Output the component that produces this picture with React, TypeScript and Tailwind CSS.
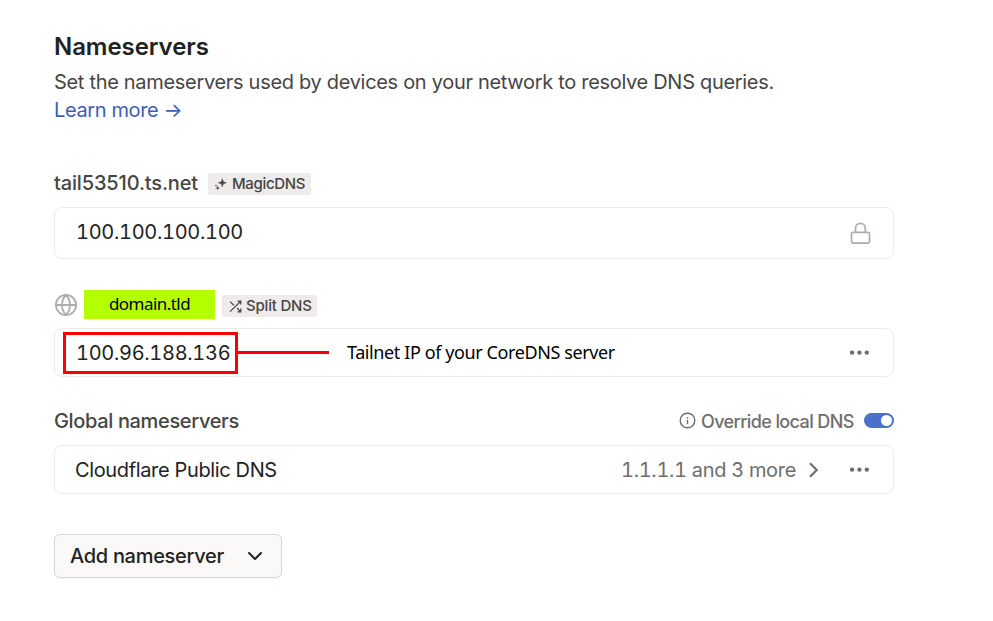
import React from "react";

function Dots() {
  return (
    <svg width="20" height="6" viewBox="0 0 20 6" fill="#706e6d" className="block">
      <circle cx="2.1" cy="2.6" r="2.2" />
      <circle cx="9.4" cy="2.6" r="2.2" />
      <circle cx="16.8" cy="2.6" r="2.2" />
    </svg>
  );
}

function Sparkles() {
  return (
    <svg width="13" height="13" viewBox="0 0 13 13" fill="#474544" className="block">
      <path d="M8.3 0.8L9.3 3.8L12.3 4.8L9.3 5.8L8.3 8.8L7.3 5.8L4.3 4.8L7.3 3.8Z" stroke="#474544" strokeWidth=".5" />
      <path d="M3.7 8.1L4.2 9.5L5.6 10L4.2 10.5L3.7 11.9L3.2 10.5L1.8 10L3.2 9.5Z" stroke="#474544" strokeWidth=".3" />
      <circle cx="2" cy="7.5" r=".8" />
    </svg>
  );
}

function Shuffle() {
  return (
    <svg width="13" height="13" viewBox="0 0 13 13" fill="none" stroke="#474544" strokeWidth="1.2" className="block">
      <path d="M8.5 1.2H11.8V4.5M11.8 1.2L1 11.6M8.5 11.8H11.8V8.5M11.8 11.8L8 8M1 1.6L5 5.3" />
    </svg>
  );
}

function Globe() {
  return (
    <svg width="24" height="24" viewBox="0 0 24 24" fill="none" stroke="#afacab" strokeWidth="1.8" className="block">
      <circle cx="12" cy="12" r="10.1" />
      <path d="M2 12H22M12 2C17.3 7.3 17.3 16.7 12 22C6.7 16.7 6.7 7.3 12 2Z" />
    </svg>
  );
}

export default function App() {
  return (
    <main className="h-[621px] w-[993px] overflow-hidden bg-white pl-[54px] pt-[31px] font-['Inter',sans-serif] text-[20px] tracking-[-0.32px] text-[#232222]">
      <div className="w-[840px] whitespace-nowrap">
        <h2 className="h-8 text-[24px] font-semibold leading-8 tracking-[-0.07px]">Nameservers</h2>
        <p className="mt-[5px] h-7 leading-7 tracking-[-0.31px] text-[#474544]">
          <span>Set the nameservers used by devices on your network to resolve DNS queries.</span>
        </p>
        <a className="flex h-7 items-center leading-7 tracking-[-0.37px] text-[#3f5db3]">
          <span>Learn more →</span>
        </a>

        <div className="mt-12 flex h-[23px] items-center">
          <span className="w-[154px] font-medium leading-[23px] tracking-[-0.15px] text-[#474544]">tail53510.ts.net</span>
          <span className="mt-px flex h-[22px] w-[103px] items-center gap-[5px] rounded-[2px] bg-[#eeebea] pl-[6px] text-[15px] font-medium text-[#474544]">
            <Sparkles />
            <span>MagicDNS</span>
          </span>
        </div>
        <div className="mt-3 flex h-[52px] items-center justify-between rounded-lg border border-[#eeebea] pl-[21px] pr-[22px]">
          <span className="-mt-[3px] tabular-nums">100.100.100.100</span>
          <svg width="21" height="23" viewBox="0 0 21 23" fill="none" stroke="#afacab" strokeWidth="1.7" className="block">
            <rect x="1.5" y="10.3" width="18" height="10.8" rx="1.5" />
            <path d="M5.5 10V6.3A4.9 4.9 0 0 1 15.3 6.3V10" />
          </svg>
        </div>

        <div className="mt-[31px] flex h-[29px] items-center">
          <Globe />
          <span className="ml-1.5 flex h-[29px] w-[131px] items-center justify-center bg-[#b3ff00] pb-[2px] font-['Noto_Sans',sans-serif] text-[17px] tracking-[-0.55px] text-black">
            <span>domain.tld</span>
          </span>
          <span className="ml-[7px] mt-[2px] flex h-[22px] w-[95px] items-center gap-[4px] rounded-[2px] bg-[#eeebea] pl-[7px] pt-px text-[15px] font-medium tracking-[-0.2px] text-[#474544]">
            <Shuffle />
            <span>Split DNS</span>
          </span>
        </div>
        <div className="mt-[9px] flex h-[49px] items-center rounded-lg border border-[#eeebea] pl-2 pr-[23px]">
          <span className="flex h-[42px] w-[175px] shrink-0 items-center border-[3px] border-[#fa0000] pl-[10px]">
            <span className="tabular-nums">100.96.188.136</span>
          </span>
          <span className="h-[3px] w-[91px] shrink-0 bg-[#fa0000]" />
          <span className="ml-[18px] font-['Noto_Sans',sans-serif] text-[18px] tracking-[-0.4px] text-black">Tailnet IP of your CoreDNS server</span>
          <span className="ml-auto"><Dots /></span>
        </div>

        <div className="mt-[31px] flex h-[26px] items-center font-medium">
          <span className="tracking-[-0.35px] text-[#474544]">Global nameservers</span>
          <svg width="17" height="17" viewBox="0 0 17 17" fill="none" stroke="#706e6d" strokeWidth="1.4" className="-mt-px ml-auto block">
            <circle cx="8.5" cy="8.5" r="7.3" />
            <path d="M8.5 7.8V12M8.5 5V6.5" />
          </svg>
          <span className="ml-[5px] w-[155px] text-[18px] tracking-[-0.6px] text-[#706e6d]">Override local DNS</span>
          <span className="-mt-px ml-2 flex h-[15px] w-[30px] items-center justify-end rounded-full bg-[#4b70cc] pr-[2px]">
            <span className="size-[11px] rounded-full bg-white" />
          </span>
        </div>
        <div className="mt-[11px] flex h-[49px] items-center rounded-lg border border-[#eeebea] pl-5 pr-[23px]">
          <span className="tracking-[-0.36px]">Cloudflare Public DNS</span>
          <span className="ml-auto tabular-nums text-[#706e6d]">1.1.1.1 and 3 more</span>
          <svg width="12" height="16" viewBox="0 0 12 16" fill="none" stroke="#706e6d" strokeWidth="2.2" className="ml-3 mr-[30px] mt-px block">
            <path d="M2 1.2L8.7 8L2 14.8" />
          </svg>
          <Dots />
        </div>

        <button className="mt-10 flex h-11 w-[228px] items-center justify-between rounded-md border border-[#dad6d5] bg-[#faf9f8] pl-[15px] pr-[18px] font-medium tracking-[-0.3px] shadow-[0_1px_1px_rgba(0,0,0,0.04)]">
          <span>Add nameserver</span>
          <svg width="16" height="10" viewBox="0 0 16 10" fill="none" stroke="#232222" strokeWidth="2" strokeLinecap="round" strokeLinejoin="round" className="block">
            <path d="M2 2L8 8L14 2" />
          </svg>
        </button>
      </div>
    </main>
  );
}
